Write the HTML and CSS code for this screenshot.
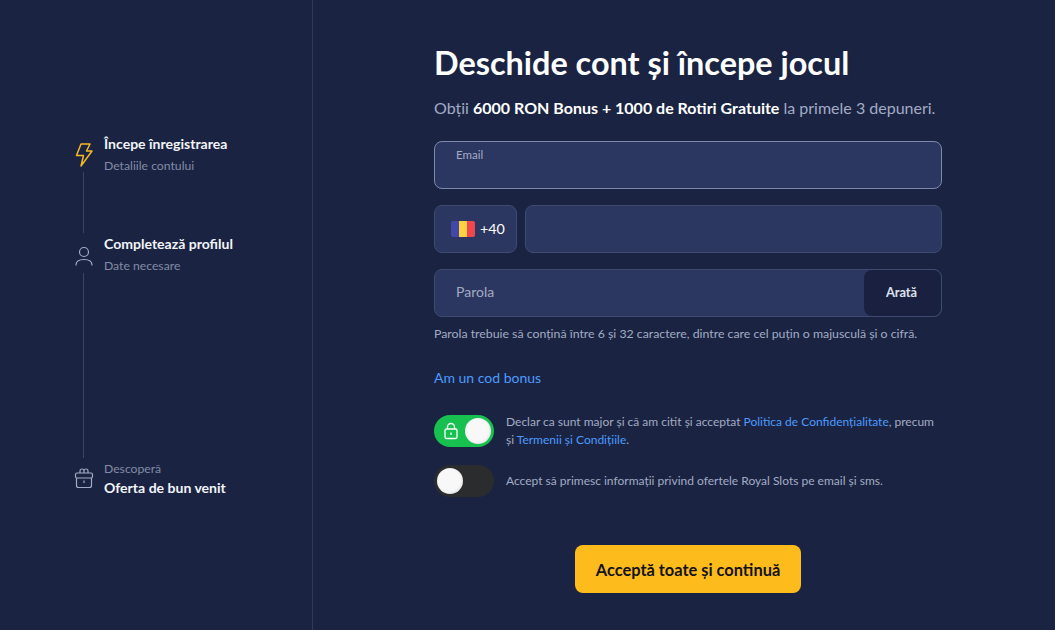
FILE: index.html
```html
<!DOCTYPE html>
<html lang="ro">
<head>
  <meta charset="UTF-8">
  <title>Deschide cont</title>
  <link rel="stylesheet" href="styles.css">
</head>
<body>
<div class="page">
  <aside class="sidebar">
    <div class="step step-first">
      <div class="step-rail">
        <svg class="step-icon" width="20" height="26" viewBox="0 0 20 26" fill="none" stroke="#f5b823" stroke-width="1.5" stroke-linejoin="round"><path d="M7 2h9l-3.500 7H18L7 24l2.500-10.500H2.500z"/></svg>
        <span class="rail-line"></span>
      </div>
      <div class="step-text">
        <div class="step-title">Începe înregistrarea</div>
        <div class="step-sub">Detaliile contului</div>
      </div>
    </div>
    <div class="step step-second">
      <div class="step-rail">
        <svg class="step-icon" width="20" height="24" viewBox="0 0 20 24" fill="none" stroke="#a3abc4" stroke-width="1.200" stroke-linecap="round"><circle cx="10" cy="7" r="4.500"/><path d="M2 20c0-4 3-5.500 8-5.500s8 1.500 8 5.500"/></svg>
        <span class="rail-line"></span>
      </div>
      <div class="step-text">
        <div class="step-title">Completează profilul</div>
        <div class="step-sub">Date necesare</div>
      </div>
    </div>
    <div class="step step-last">
      <div class="step-rail">
        <svg class="step-icon" width="20" height="22" viewBox="0 0 20 22" fill="none" stroke="#a3abc4" stroke-width="1.200" stroke-linejoin="round"><rect x="1.500" y="6" width="17" height="5" rx="1.500"/><path d="M2.500 11v7.500a2 2 0 0 0 2 2h11a2 2 0 0 0 2-2V11"/><path d="M6 6V4a2 2 0 0 1 4 0v2M10 6V4a2 2 0 0 1 4 0v2"/><path d="M10 13.500v2.500"/></svg>
      </div>
      <div class="step-text">
        <div class="step-sub">Descoperă</div>
        <div class="step-title">Oferta de bun venit</div>
      </div>
    </div>
  </aside>

  <main class="main">
    <form class="signup">
      <h1>Deschide cont și începe jocul</h1>
      <p class="lead">Obții <strong>6000 RON Bonus + 1000 de Rotiri Gratuite</strong> la primele 3 depuneri.</p>

      <div class="field field-active">
        <span class="field-label">Email</span>
      </div>

      <div class="phone-row">
        <div class="field phone-code">
          <span class="flag"><i class="flag-blue"></i><i class="flag-yellow"></i><i class="flag-red"></i></span>
          <span class="phone-prefix">+40</span>
        </div>
        <div class="field phone-number"></div>
      </div>

      <div class="field password">
        <span class="placeholder">Parola</span>
        <button type="button" class="show-btn">Arată</button>
      </div>
      <p class="hint">Parola trebuie să conțină între 6 și 32 caractere, dintre care cel puțin o majusculă și o cifră.</p>

      <a class="bonus-link" href="#">Am un cod bonus</a>

      <div class="consent consent-terms">
        <span class="toggle toggle-on">
          <svg width="16" height="18" viewBox="0 0 16 18" fill="none" stroke="#fff" stroke-width="1.300"><rect x="2" y="7" width="12" height="9.500" rx="1.500"/><path d="M4.500 7V5a3.500 3.500 0 0 1 7 0v2"/><path d="M8 10.500v2.500"/></svg>
          <span class="knob"></span>
        </span>
        <p>Declar ca sunt major și că am citit și acceptat <a href="#">Politica de Confidențialitate</a>, precum<br>și <a href="#">Termenii și Condițiile</a>.</p>
      </div>

      <div class="consent consent-offers">
        <span class="toggle toggle-off"><span class="knob"></span></span>
        <p>Accept să primesc informații privind ofertele Royal Slots pe email și sms.</p>
      </div>

      <div class="actions">
        <button type="button" class="submit-btn">Acceptă toate și continuă</button>
      </div>
    </form>
  </main>
</div>
</body>
</html>
```

FILE: styles.css
```css
* {
  box-sizing: border-box;
}
body {
  margin: 0;
  background-color: #1a2442;
  font-family: 'Lato', sans-serif;
  color: #fff;
}
.page {
  display: flex;
  height: 630px;
  overflow: hidden;
}

/* left steps */
.sidebar {
  width: 313px;
  flex: none;
  padding: 134px 0 0 74px;
  border-right: 1px solid #2e3a5c;
}
.step {
  display: flex;
  gap: 10px;
}
.step-first {
  height: 100px;
}
.step-second {
  height: 226px;
}
.step-rail {
  width: 20px;
  display: flex;
  flex-direction: column;
  align-items: center;
  padding-top: 8px;
}
.step-second .step-icon {
  margin-top: 3px;
}
.step-last .step-rail {
  padding-top: 7px;
}
.step-icon {
  flex: none;
}
.rail-line {
  flex: 1;
  width: 1px;
  margin: 4px 2px 1px 0;
  background-color: #3a4566;
}
.step-second .rail-line {
  margin-bottom: 2px;
}
.step-title {
  font-size: 14.05px;
  font-weight: 700;
  line-height: 20px;
  color: #f2f4f9;
}
.step-sub {
  font-size: 12.2px;
  line-height: 20px;
  margin-top: 2px;
  color: #838ba6;
}
.step-last .step-sub {
  margin-top: -1px;
  margin-bottom: -1px;
}

/* form */
.main {
  flex: 1;
  padding: 42px 0 0 121px;
}
.signup {
  width: 508px;
}
h1 {
  margin: 0;
  font-size: 32.4px;
  font-weight: 700;
  line-height: 42px;
}
.lead {
  margin: 13px 0 0;
  font-size: 16px;
  line-height: 22px;
  color: #a3abc4;
}
.lead strong {
  color: #fff;
}
.field {
  height: 48px;
  border: 1px solid #3e4a70;
  border-radius: 8px;
  background-color: #2b3760;
}
.field-active {
  margin-top: 22px;
  padding: 6px 21px;
  border-color: #7d88ad;
}
.field-label {
  display: block;
  font-size: 11.5px;
  line-height: 14px;
  color: #a3abc4;
}
.phone-row {
  display: flex;
  gap: 8px;
  margin-top: 16px;
}
.phone-code {
  width: 83px;
  flex: none;
  display: flex;
  align-items: center;
  gap: 5px;
  padding-left: 16px;
  font-size: 14.3px;
}
.phone-prefix {
  margin-bottom: 2px;
}
.phone-number {
  flex: 1;
}
.flag {
  display: flex;
  width: 24px;
  height: 16px;
  border-radius: 2px;
  overflow: hidden;
}
.flag i {
  flex: 1;
}
.flag-blue {
  background-color: #4247a8;
}
.flag-yellow {
  background-color: #fdd240;
}
.flag-red {
  background-color: #f0474f;
}
.password {
  display: flex;
  align-items: center;
  justify-content: space-between;
  margin-top: 16px;
  padding-left: 21px;
}
.placeholder {
  margin-bottom: 4px;
  font-size: 14px;
  color: #a3abc4;
}
.show-btn {
  width: 77px;
  height: 46px;
  padding: 0 2px 2px 0;
  border: none;
  border-radius: 8px;
  background-color: #1a2140;
  color: #dfe3ee;
  font-family: inherit;
  font-size: 12.8px;
  font-weight: 700;
}
.hint {
  margin: 9px 0 0;
  font-size: 12.3px;
  line-height: 16px;
  color: #a3abc4;
}
.bonus-link {
  display: block;
  margin-top: 26px;
  font-size: 14px;
  line-height: 20px;
  color: #4d9bff;
  text-decoration: none;
}
.consent {
  display: flex;
  align-items: center;
  gap: 12px;
  font-size: 12px;
  line-height: 18px;
  color: #a3abc4;
}
.consent p {
  margin: 0;
}
.consent a {
  color: #4d9bff;
  text-decoration: none;
}
.consent-terms {
  margin-top: 25px;
}
.consent-offers {
  margin-top: 16px;
}
.toggle {
  width: 60px;
  height: 32px;
  flex: none;
  display: flex;
  align-items: center;
  padding: 0 3px;
  border-radius: 16px;
}
.toggle-on {
  justify-content: space-between;
  padding-left: 9px;
  background-color: #18c14f;
}
.toggle-off {
  background-color: #2b2c2e;
}
.knob {
  width: 26px;
  height: 26px;
  border-radius: 50%;
  background-color: #f8f8f9;
  box-shadow: inset -1px -1px 3px rgba(0,0,0,0.08);
}
.actions {
  display: flex;
  justify-content: center;
  margin-top: 48px;
}
.submit-btn {
  width: 226px;
  height: 48px;
  border: none;
  border-radius: 8px;
  background-color: #febb1c;
  color: #12131a;
  font-family: inherit;
  font-size: 16.4px;
  font-weight: 700;
}
```
